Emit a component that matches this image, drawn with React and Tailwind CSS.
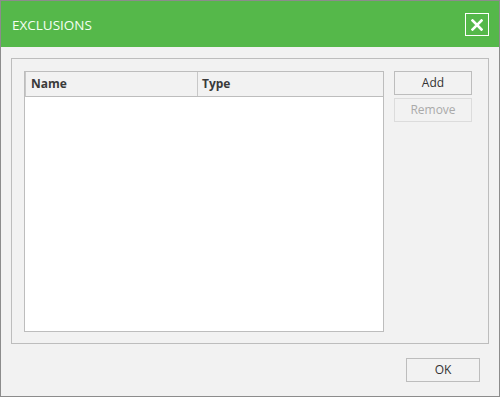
export default function App() {
  const font = { fontFamily: '"Open Sans", "Noto Sans", sans-serif' };
  return (
    <div className="w-[500px] h-[397px] border border-[#8c8c8c] bg-[#f2f2f2] flex flex-col" style={font}>
      <div className="h-[46px] bg-[#55b84a] flex items-center justify-between pl-[11px] pr-[10px] shrink-0">
        <span className="text-[13.5px] text-[#f4fff2] mt-[3px]">EXCLUSIONS</span>
        <div className="w-[24px] h-[23px] border border-white flex items-center justify-center mt-[1px]">
          <svg width="12" height="12" viewBox="0 0 12 12">
            <path d="M1.5 1.5 L10.5 10.5 M10.5 1.5 L1.5 10.5" stroke="white" strokeWidth="2.6" strokeLinecap="square" />
          </svg>
        </div>
      </div>
      <div className="ml-[10px] mt-[11px] w-[478px] h-[286px] border border-[#bdbdbd] flex pl-[12px] pt-[12px]">
        <div className="w-[360px] h-[261px] border border-[#bdbdbd] bg-white flex flex-col">
          <div className="h-[25px] bg-[#f2f2f2] border-b border-[#bdbdbd] border-l border-l-[#c8c8c8] flex text-[12px] font-bold text-[#3a3a3a]">
            <div className="w-[172px] border-r border-[#c8c8c8] pl-[5px] flex items-center">Name</div>
            <div className="flex-1 pl-[4px] flex items-center">Type</div>
          </div>
        </div>
        <div className="ml-[10px] flex flex-col gap-[3px]">
          <div className="w-[78px] h-[24px] border border-[#bdbdbd] bg-[#f2f2f2] flex items-center justify-center text-[12px] text-[#333]">Add</div>
          <div className="w-[78px] h-[24px] border border-[#dcdcdc] bg-[#f2f2f2] flex items-center justify-center text-[12px] text-[#aaaaaa]">Remove</div>
        </div>
      </div>
      <div className="flex justify-end pr-[19px] mt-[14px]">
        <div className="w-[74px] h-[24px] border border-[#bdbdbd] flex items-center justify-center text-[12px] text-[#333]">OK</div>
      </div>
    </div>
  );
}
